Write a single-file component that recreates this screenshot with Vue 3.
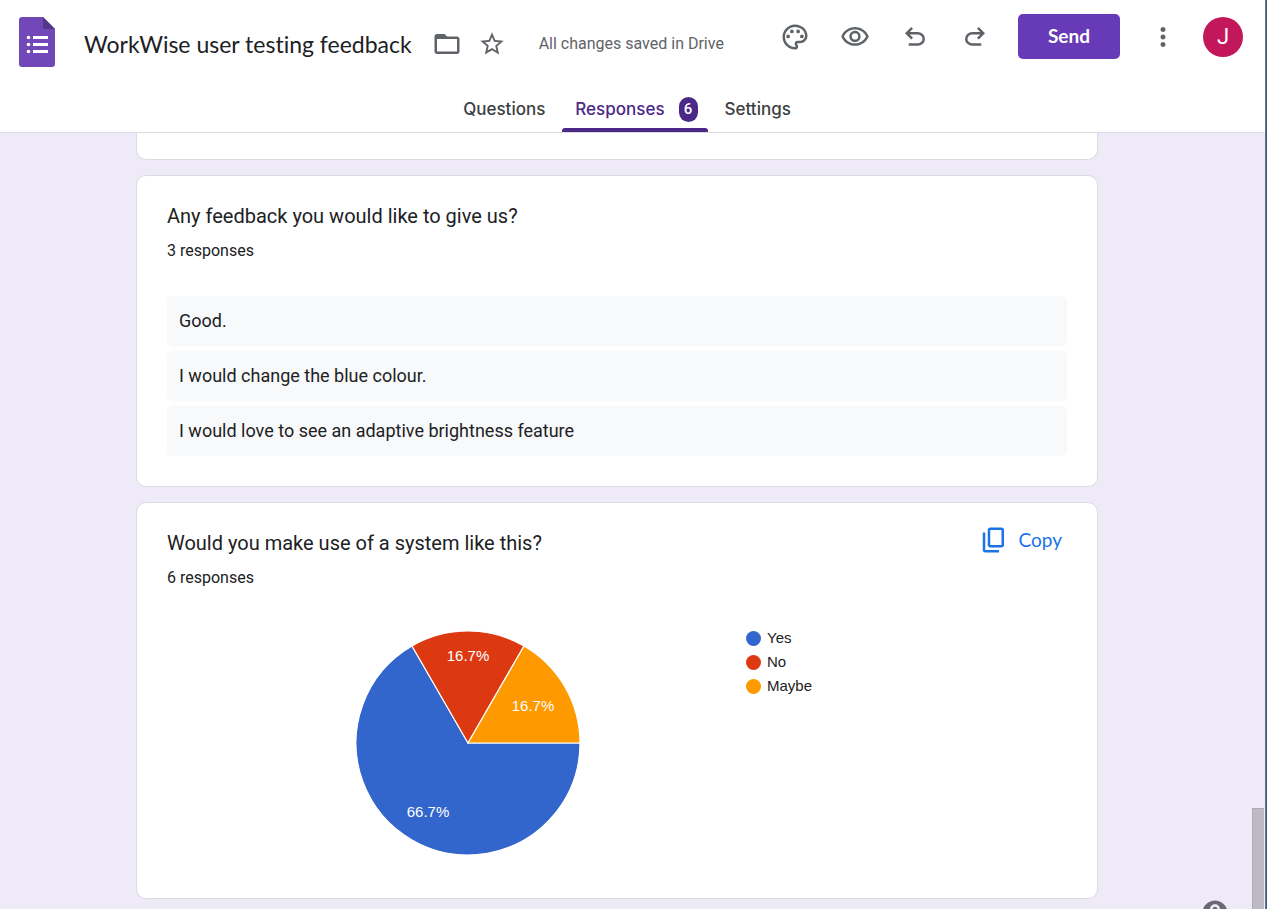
<script setup>
const icons = {
  folder:
    'M20 6h-8l-2-2H4c-1.1 0-1.99.9-1.99 2L2 18c0 1.1.9 2 2 2h16c1.1 0 2-.9 2-2V8c0-1.1-.9-2-2-2zm0 12H4V8h16v10z',
  star:
    'M22 9.24l-7.19-.62L12 2 9.19 8.63 2 9.24l5.46 4.73L5.82 21 12 17.27 18.18 21l-1.63-7.03L22 9.24zM12 15.4l-3.76 2.27 1-4.28-3.32-2.88 4.38-.38L12 6.1l1.71 4.04 4.38.38-3.32 2.88 1 4.28L12 15.4z',
  palette:
    'M12 22C6.49 22 2 17.51 2 12S6.49 2 12 2s10 4.04 10 9c0 3.31-2.69 6-6 6h-1.77c-.28 0-.5.22-.5.5 0 .12.05.23.13.33.41.47.64 1.06.64 1.67A2.5 2.5 0 0 1 12 22zm0-18c-4.41 0-8 3.59-8 8s3.59 8 8 8c.28 0 .5-.22.5-.5a.54.54 0 0 0-.14-.35c-.41-.46-.63-1.05-.63-1.65a2.5 2.5 0 0 1 2.5-2.5H16c2.21 0 4-1.79 4-4 0-3.86-3.59-7-8-7zM5 11.5a1.5 1.5 0 1 0 3 0a1.5 1.5 0 1 0-3 0zM8 7.5a1.5 1.5 0 1 0 3 0a1.5 1.5 0 1 0-3 0zM13 7.5a1.5 1.5 0 1 0 3 0a1.5 1.5 0 1 0-3 0zM16 11.5a1.5 1.5 0 1 0 3 0a1.5 1.5 0 1 0-3 0z',
  eye:
    'M12 6c3.79 0 7.17 2.13 8.82 5.5C19.17 14.87 15.79 17 12 17s-7.17-2.13-8.82-5.5C4.83 8.13 8.21 6 12 6m0-2C7 4 2.73 7.11 1 11.5 2.73 15.89 7 19 12 19s9.27-3.11 11-7.5C21.27 7.11 17 4 12 4zm0 5a2.5 2.5 0 0 1 0 5 2.5 2.5 0 0 1 0-5m0-2c-2.48 0-4.5 2.02-4.5 4.5S9.52 16 12 16s4.5-2.02 4.5-4.5S14.48 7 12 7z',
  undo:
    'M7 19v-2h7.1q1.575 0 2.738-1T18 13.5 16.838 11 14.1 10H7.8l2.6 2.6L9 14 4 9l5-5 1.4 1.4L7.8 8h6.3q2.425 0 4.163 1.575T20 13.5t-1.737 3.925T14.1 19z',
  redo:
    'M9.9 19q-2.425 0-4.163-1.575T4 13.5t1.737-3.925T9.9 8h6.3l-2.6-2.6L15 4l5 5-5 5-1.4-1.4 2.6-2.6H9.9q-1.575 0-2.737 1T6 13.5 7.163 16 9.9 17H17v2z',
  more:
    'M12 8c1.1 0 2-.9 2-2s-.9-2-2-2-2 .9-2 2 .9 2 2 2zm0 2c-1.1 0-2 .9-2 2s.9 2 2 2 2-.9 2-2-.9-2-2-2zm0 6c-1.1 0-2 .9-2 2s.9 2 2 2 2-.9 2-2-.9-2-2-2z',
  copy:
    'M9 18q-.825 0-1.412-.587T7 16V4q0-.825.588-1.412T9 2h9q.825 0 1.413.588T20 4v12q0 .825-.587 1.413T18 18zm0-2h9V4H9zm-4 6q-.825 0-1.412-.587T3 20V6h2v14h11v2z',
  help:
    'M12 2C6.48 2 2 6.48 2 12s4.48 10 10 10 10-4.48 10-10S17.52 2 12 2zm1 17h-2v-2h2v2zm2.07-7.75l-.9.92C13.45 12.9 13 13.5 13 15h-2v-.5c0-1.1.45-2.1 1.17-2.83l1.24-1.26c.37-.36.59-.86.59-1.41 0-1.1-.9-2-2-2s-2 .9-2 2H8c0-2.21 1.79-4 4-4s4 1.79 4 4c0 .88-.36 1.68-.93 2.25z',
}

const tools = [
  { icon: 'palette', label: 'Customise theme' },
  { icon: 'eye', label: 'Preview' },
  { icon: 'undo', label: 'Undo' },
  { icon: 'redo', label: 'Redo' },
]

const answers = [
  'Good.',
  'I would change the blue colour.',
  'I would love to see an adaptive brightness feature',
]

const radius = 112
const slices = [
  { name: 'Yes', color: '#3366cc', from: 0, to: 240, pct: '66.7%', x: -40, y: 69 },
  { name: 'No', color: '#dc3912', from: 240, to: 300, pct: '16.7%', x: 0, y: -87 },
  { name: 'Maybe', color: '#ff9900', from: 300, to: 360, pct: '16.7%', x: 65, y: -37 },
]

function point(angle) {
  const a = (angle * Math.PI) / 180
  return `${(radius * Math.cos(a)).toFixed(2)} ${(radius * Math.sin(a)).toFixed(2)}`
}

function wedge(s) {
  const large = s.to - s.from > 180 ? 1 : 0
  return `M0 0L${point(s.from)}A${radius} ${radius} 0 ${large} 1 ${point(s.to)}Z`
}
</script>

<template>
  <div class="page">
    <header class="top">
      <div class="bar">
        <div class="doc">
          <a class="logo" href="#" aria-label="Forms home">
            <svg width="36" height="50" viewBox="0 0 36 50">
              <path d="M3 0h21l12 12v35a3 3 0 0 1-3 3H3a3 3 0 0 1-3-3V3a3 3 0 0 1 3-3z" fill="#7248b9" />
              <path d="M24 0l12 12H24z" fill="#54368a" />
              <g fill="#fff">
                <circle cx="9.500" cy="20.500" r="1.800" />
                <circle cx="9.500" cy="27.500" r="1.800" />
                <circle cx="9.500" cy="34.500" r="1.800" />
                <rect x="14" y="19" width="15" height="3" />
                <rect x="14" y="26" width="15" height="3" />
                <rect x="14" y="33" width="15" height="3" />
              </g>
            </svg>
          </a>
          <h1 class="title">WorkWise user testing feedback</h1>
          <button class="plain" type="button" aria-label="Move to folder">
            <svg width="30" height="30" viewBox="0 0 24 24"><path :d="icons.folder" /></svg>
          </button>
          <button class="plain star" type="button" aria-label="Star">
            <svg width="28" height="28" viewBox="0 0 24 24"><path :d="icons.star" /></svg>
          </button>
          <span class="saved">All changes saved in Drive</span>
        </div>
        <div class="actions">
          <button v-for="t in tools" :key="t.icon" class="plain tool" type="button" :aria-label="t.label">
            <svg width="30" height="30" viewBox="0 0 24 24"><path :d="icons[t.icon]" /></svg>
          </button>
          <button class="send" type="button">Send</button>
          <button class="plain tool more" type="button" aria-label="More">
            <svg width="30" height="30" viewBox="0 0 24 24"><path :d="icons.more" /></svg>
          </button>
          <button class="avatar" type="button">J</button>
        </div>
      </div>
      <nav class="tabs">
        <a class="tab" href="#questions">Questions</a>
        <a class="tab active" href="#responses">Responses <span class="badge">6</span></a>
        <a class="tab" href="#settings">Settings</a>
      </nav>
    </header>

    <main class="body">
      <div class="cards">
        <section class="card cut"></section>

        <section class="card">
          <h2 class="question">Any feedback you would like to give us?</h2>
          <p class="count">3 responses</p>
          <ul class="answers">
            <li v-for="a in answers" :key="a">{{ a }}</li>
          </ul>
        </section>

        <section class="card">
          <div class="head">
            <h2 class="question">Would you make use of a system like this?</h2>
            <button class="copy" type="button">
              <svg width="30" height="30" viewBox="0 0 24 24"><path :d="icons.copy" /></svg>
              <span>Copy</span>
            </button>
          </div>
          <p class="count">6 responses</p>
          <div class="chart">
            <svg class="pie" width="226" height="226" viewBox="-113 -113 226 226" role="img" aria-label="Responses chart">
              <path v-for="s in slices" :key="s.name" :d="wedge(s)" :fill="s.color" class="slice" />
              <text v-for="s in slices" :key="s.name + s.pct" :x="s.x" :y="s.y" dy="5" class="pct">{{ s.pct }}</text>
            </svg>
            <ul class="legend">
              <li v-for="s in slices" :key="s.name">
                <svg width="15" height="15" viewBox="0 0 15 15"><circle cx="7.500" cy="7.500" r="7.500" :fill="s.color" /></svg>
                {{ s.name }}
              </li>
            </ul>
          </div>
        </section>
      </div>
      <div class="thumb"></div>
      <button class="plain help" type="button" aria-label="Help">
        <svg width="30" height="30" viewBox="0 0 24 24"><path :d="icons.help" /></svg>
      </button>
    </main>
  </div>
</template>

<style>
body {
  margin: 0;
  overflow: hidden;
  background: #2a6284;
}
</style>

<style scoped>
.page {
  display: flex;
  flex-direction: column;
  box-sizing: border-box;
  height: 100vh;
  margin-right: 1px;
  border-right: 1px solid #6f7480;
  background: #fff;
  color: #202124;
  font-family: Roboto, 'Liberation Sans', sans-serif;
}

h1, h2, p, ul {
  margin: 0;
  padding: 0;
  font-weight: 400;
  list-style: none;
}

button {
  padding: 0;
  border: 0;
  background: none;
  font-family: inherit;
  cursor: pointer;
}

svg {
  display: block;
  flex: none;
}

.top {
  flex: none;
  border-bottom: 1px solid #dadce0;
}

.bar {
  display: flex;
  justify-content: space-between;
  align-items: flex-start;
  padding: 14px 22px 0 19px;
}

.doc,
.actions {
  display: flex;
  align-items: center;
}

.doc {
  height: 60px;
}

.logo {
  align-self: flex-start;
  margin-top: 3px;
}

.title {
  margin: 0 20px 0 29px;
  font-family: Lato, sans-serif;
  font-size: 23px;
  font-variant-ligatures: none;
  line-height: 30px;
  white-space: nowrap;
}

.plain {
  display: flex;
  justify-content: center;
  align-items: center;
  fill: #5f6368;
}

.star {
  margin: 0 33px 0 16px;
}

.saved {
  color: #5f6368;
  font-size: 16px;
  line-height: 20px;
  white-space: nowrap;
}

.tool {
  width: 60px;
  height: 45px;
}

.send {
  width: 102px;
  height: 45px;
  margin-left: 13px;
  padding-bottom: 2px;
  border-radius: 5px;
  background: #673ab7;
  color: #fff;
  font-family: Lato, sans-serif;
  font-size: 19px;
  font-weight: 700;
}

.more {
  margin: 0 10px 0 13px;
}

.avatar {
  width: 40px;
  height: 40px;
  border-radius: 50%;
  background: #c2185b;
  color: #fff;
  font-size: 22px;
}

.tabs {
  display: flex;
  justify-content: center;
  gap: 4px;
  padding-right: 11px;
  margin-top: 12px;
}

.tab {
  display: flex;
  align-items: center;
  gap: 14px;
  box-sizing: border-box;
  height: 46px;
  padding: 0 13px;
  color: #3c4043;
  font-family: Inter, sans-serif;
  font-size: 17px;
  font-weight: 500;
  text-decoration: none;
}

.active {
  position: relative;
  padding-right: 10px;
  color: #4b2886;
}

.active::after {
  content: '';
  position: absolute;
  left: 0;
  right: 0;
  bottom: 0;
  height: 4px;
  border-radius: 3px 3px 0 0;
  background: #4b2886;
}

.badge {
  width: 19px;
  border-radius: 10px;
  background: #4b2886;
  color: #fff;
  font-family: Roboto, sans-serif;
  font-size: 15px;
  line-height: 25px;
  text-align: center;
}

.body {
  position: relative;
  flex: 1;
  min-height: 0;
  overflow: hidden;
  padding-right: 31px;
  background: #eeeaf8;
}

.cards {
  display: flex;
  flex-direction: column;
  gap: 15px;
  max-width: 962px;
  margin: 0 auto;
}

.card {
  padding: 25px 30px 30px;
  border: 1px solid #dadce0;
  border-radius: 10px;
  background: #fff;
}

.cut {
  padding: 0 30px 26px;
  border-top: 0;
  border-radius: 0 0 10px 10px;
}

.head {
  display: flex;
  justify-content: space-between;
  gap: 20px;
}

.question {
  font-size: 20px;
  line-height: 30px;
}

.count {
  margin-top: 10px;
  font-size: 16px;
  line-height: 20px;
}

.answers {
  display: flex;
  flex-direction: column;
  gap: 5px;
  margin-top: 35px;
}

.answers li {
  padding: 10px 12px;
  border-radius: 5px;
  background: #f8f9fa;
  font-size: 18px;
  line-height: 30px;
}

.copy {
  display: flex;
  align-items: center;
  gap: 10px;
  height: 24px;
  padding-right: 5px;
  color: #1a73e8;
  fill: #1a73e8;
  font-family: Lato, sans-serif;
  font-size: 19px;
}

.copy span {
  padding-bottom: 2px;
}

.chart {
  display: flex;
  align-items: flex-start;
  gap: 165px;
  margin-top: 38px;
  padding: 0 0 12px 188px;
}

.pie {
  margin-top: 4px;
}

.slice {
  stroke: #fff;
  stroke-width: 1.2px;
}

.pct {
  fill: #fff;
  font-family: 'Liberation Sans', sans-serif;
  font-size: 15px;
  text-anchor: middle;
}

.legend {
  color: #222;
  font-family: 'Liberation Sans', sans-serif;
  font-size: 15px;
  line-height: 24px;
}

.legend li {
  display: flex;
  align-items: center;
  gap: 6px;
}

.thumb {
  position: absolute;
  right: 1px;
  bottom: 0;
  width: 12px;
  height: 101px;
  box-sizing: border-box;
  border: 1px solid #aeabb5;
  border-width: 1px 0 0 1px;
  background: #bdbac4;
}

.help {
  position: absolute;
  right: 35px;
  bottom: -19px;
  fill: #6b6873;
}
</style>
